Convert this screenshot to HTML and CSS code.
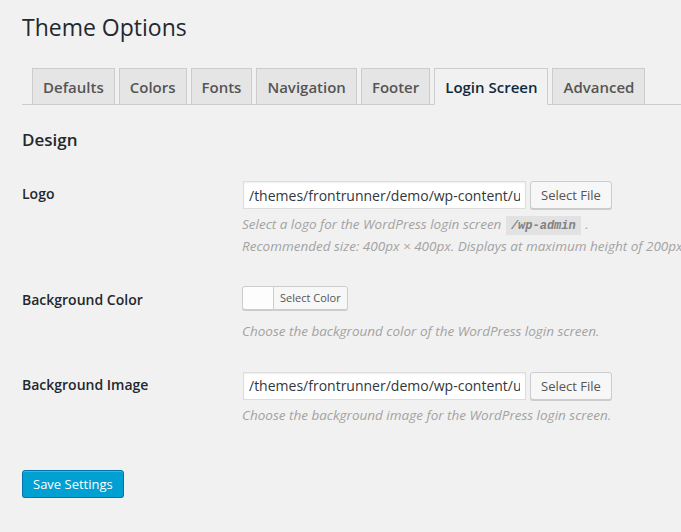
FILE: index.html
```html
<!DOCTYPE html>
<html lang="en">
<head>
<meta charset="utf-8">
<title>Theme Options</title>
<link rel="stylesheet" href="styles.css">
</head>
<body>
<div class="wrap">
  <h1 class="page-title">Theme Options</h1>
  <nav class="tabs">
    <a class="tab">Defaults</a>
    <a class="tab">Colors</a>
    <a class="tab">Fonts</a>
    <a class="tab">Navigation</a>
    <a class="tab">Footer</a>
    <a class="tab tab-active">Login Screen</a>
    <a class="tab">Advanced</a>
  </nav>
  <h2 class="section-title">Design</h2>
  <div class="form">
    <div class="row">
      <div class="label">Logo</div>
      <div class="field">
        <div class="file-row">
          <input class="text-input" type="text" value="/themes/frontrunner/demo/wp-content/uploads/logo.png">
          <button class="button" type="button">Select File</button>
        </div>
        <p class="description">Select a logo for the WordPress login screen <code class="code">/wp-admin</code> .</p>
        <p class="description">Recommended size: 400px × 400px. Displays at maximum height of 200px.</p>
      </div>
    </div>
    <div class="row">
      <div class="label">Background Color</div>
      <div class="field field-picker">
        <div class="picker">
          <span class="picker-text">Select Color</span>
        </div>
        <p class="description">Choose the background color of the WordPress login screen.</p>
      </div>
    </div>
    <div class="row">
      <div class="label">Background Image</div>
      <div class="field">
        <div class="file-row">
          <input class="text-input" type="text" value="/themes/frontrunner/demo/wp-content/uploads/bg.jpg">
          <button class="button" type="button">Select File</button>
        </div>
        <p class="description">Choose the background image for the WordPress login screen.</p>
      </div>
    </div>
  </div>
  <div class="submit">
    <button class="button-primary" type="button">Save Settings</button>
  </div>
</div>
</body>
</html>
```

FILE: styles.css
```css
html, body {
  margin: 0;
  padding: 0;
  background: #f1f1f1;
  overflow: hidden;
}
body {
  font-family: "Open Sans", "Liberation Sans", sans-serif;
  font-size: 13px;
  line-height: 1.4;
  color: #444;
}
.wrap {
  margin-left: 22px;
}
.page-title {
  margin: 0;
  padding: 13px 0 4px;
  font-size: 23px;
  font-weight: 400;
  line-height: 29px;
  color: #23282d;
}
.tabs {
  display: flex;
  align-items: flex-start;
  gap: 4px;
  padding: 22px 0 0 10px;
  border-bottom: 1px solid #ccc;
}
.tab {
  display: block;
  padding: 6px 10px 5px;
  border: 1px solid #ccc;
  border-bottom: none;
  background: #e5e5e5;
  color: #555;
  font-size: 15px;
  font-weight: 600;
  line-height: 24px;
  white-space: nowrap;
}
.tab-active {
  background: #f1f1f1;
  border-bottom: 1px solid #f1f1f1;
  margin-bottom: -1px;
  color: #0f2a3e;
}
.section-title {
  margin: 23px 0 13px;
  font-size: 17px;
  font-weight: 600;
  line-height: 24px;
  color: #23282d;
}
.row {
  display: grid;
  grid-template-columns: 210px auto;
}
.label {
  padding: 20px 10px 20px 0;
  font-size: 14px;
  font-weight: 600;
  line-height: 1.3;
  color: #23282d;
}
.field {
  padding: 15px 10px;
  white-space: nowrap;
}
.field-picker {
  padding-bottom: 14px;
}
.file-row {
  display: flex;
  align-items: center;
  gap: 3px;
}
.text-input {
  box-sizing: border-box;
  width: 283px;
  height: 28px;
  margin: 1px;
  padding: 3px 5px;
  border: 1px solid #ddd;
  box-shadow: inset 0 1px 2px rgba(0, 0, 0, 0.07);
  background: #fff;
  color: #32373c;
  font-family: "Open Sans", "Liberation Sans", sans-serif;
  font-size: 14px;
  outline: none;
}
.button {
  box-sizing: border-box;
  height: 28px;
  margin: 0;
  padding: 0 10px 1px;
  border: 1px solid #ccc;
  border-radius: 3px;
  background: #f7f7f7;
  box-shadow: 0 1px 0 #ccc;
  color: #555;
  font-family: "Open Sans", "Liberation Sans", sans-serif;
  font-size: 13px;
  line-height: 26px;
}
.description {
  margin: 4px 0 0;
  font-size: 13.5px;
  font-style: italic;
  line-height: 19.5px;
  color: #a3a3a3;
}
.file-row + .description {
  margin-top: 5px;
}
.description + .description {
  margin-top: 2px;
}
.code {
  padding: 3px 5px 2px;
  margin: 0 1px;
  background: rgba(0, 0, 0, 0.06);
  font-family: "Liberation Mono", "DejaVu Sans Mono", monospace;
  font-size: 12px;
  font-style: italic;
  font-weight: bold;
  line-height: 1;
  color: #808080;
}
.picker {
  display: inline-flex;
  box-sizing: border-box;
  height: 24px;
  margin: 0 6px 8px 0;
  padding-left: 30px;
  border: 1px solid #ccc;
  border-radius: 3px;
  background: #fdfdfd;
  box-shadow: 0 1px 0 #ccc;
  vertical-align: top;
}
.picker-text {
  padding: 0 6px;
  border-left: 1px solid #ccc;
  border-radius: 0 2px 2px 0;
  background: #f7f7f7;
  color: #555;
  font-size: 11px;
  line-height: 22px;
}
.submit {
  margin-top: 20px;
  padding-top: 10px;
}
.button-primary {
  box-sizing: border-box;
  height: 28px;
  padding: 0 10px 1px;
  border: 1px solid #0073aa;
  border-radius: 3px;
  background: #00a0d2;
  box-shadow: inset 0 1px 0 rgba(120, 200, 230, 0.5), 0 1px 0 rgba(0, 0, 0, 0.15);
  color: #fff;
  font-family: "Open Sans", "Liberation Sans", sans-serif;
  font-size: 13px;
  line-height: 26px;
}
```
